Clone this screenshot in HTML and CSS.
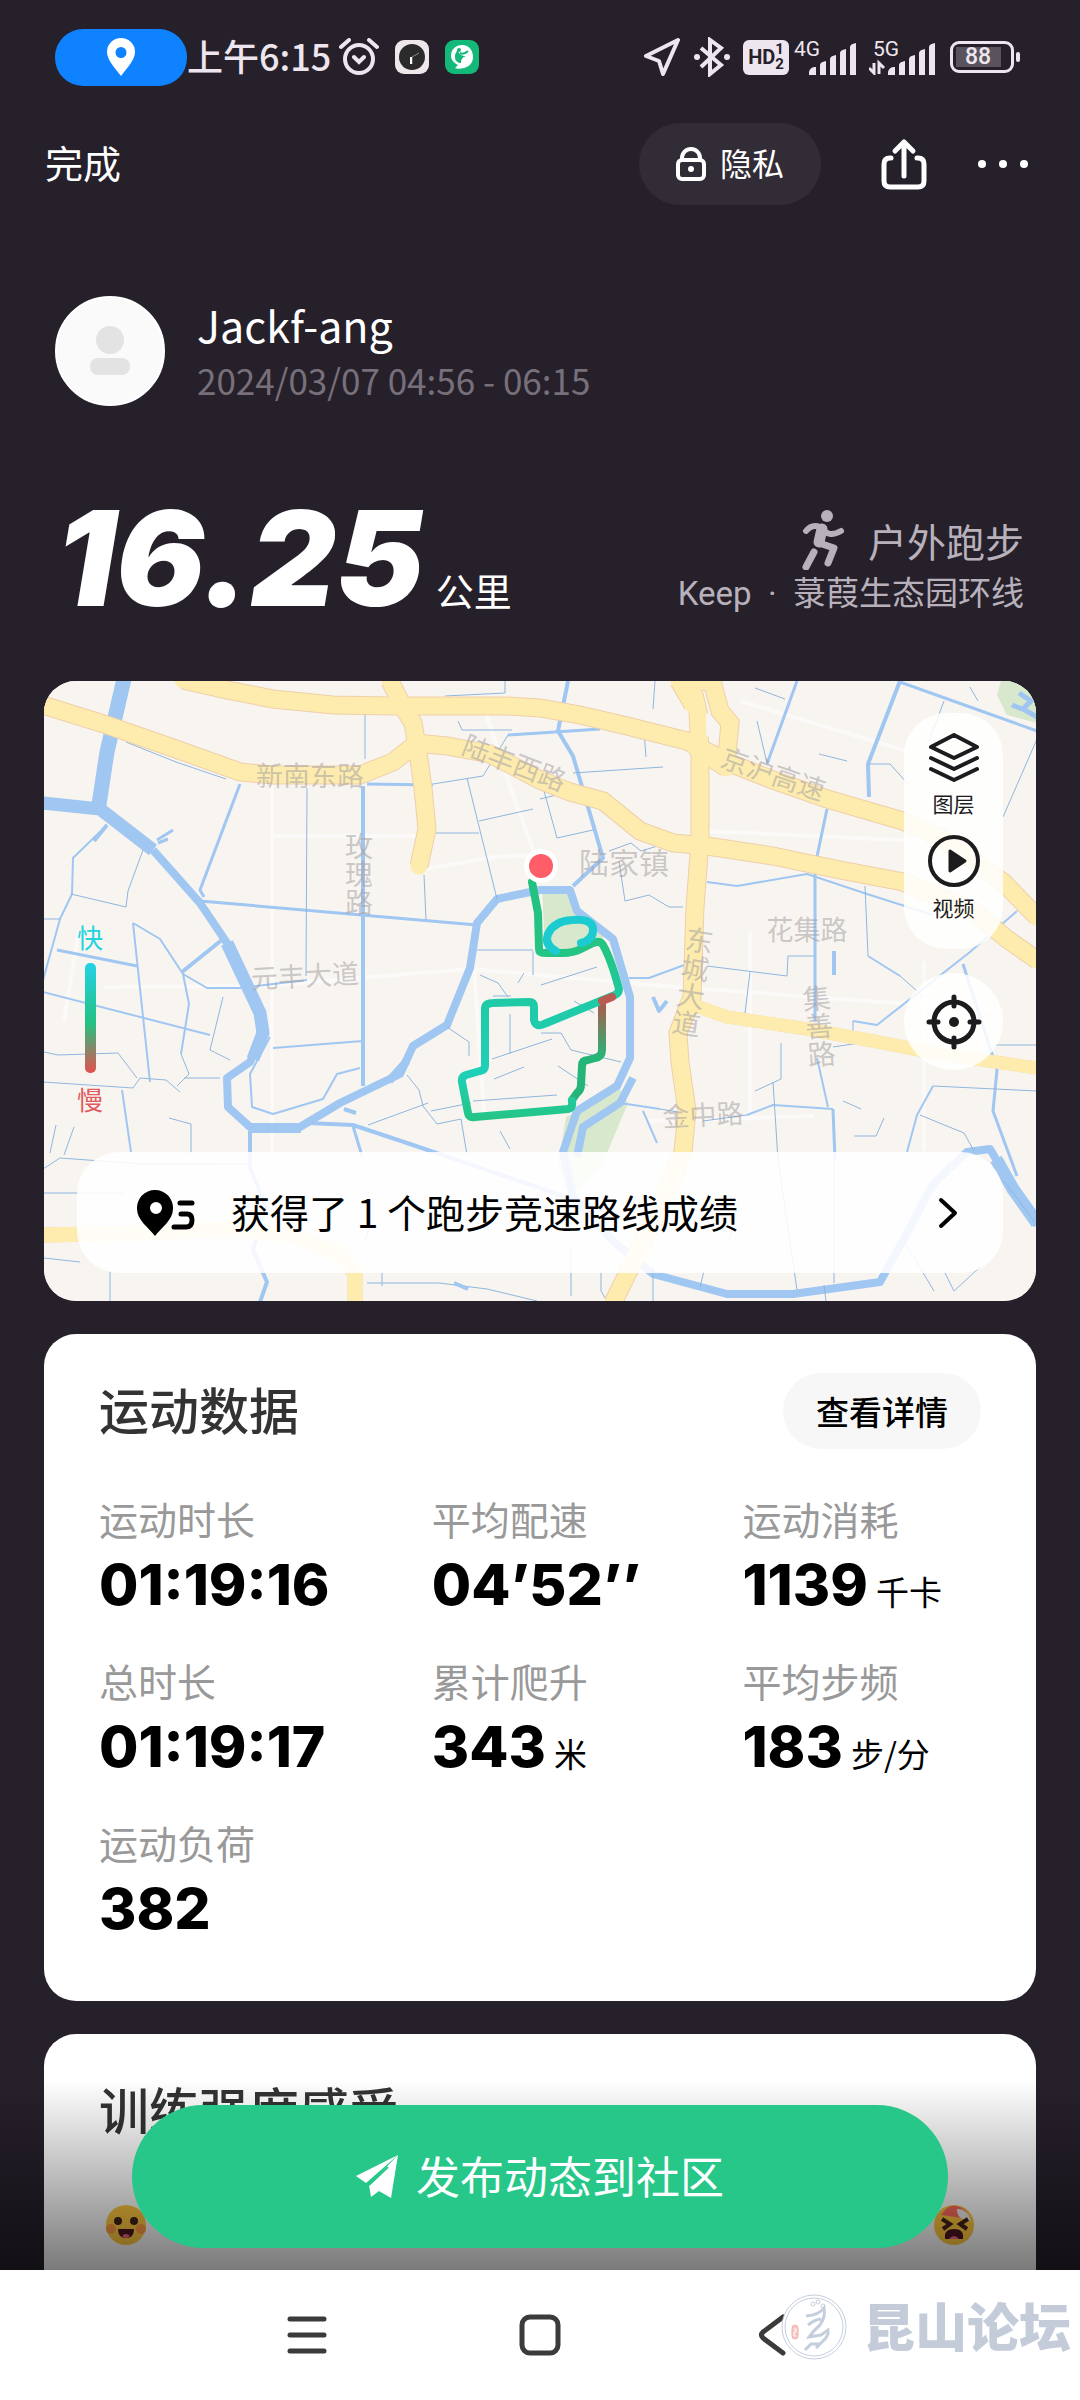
FILE: index.html
```html
<!DOCTYPE html>
<html lang="zh-CN">
<head>
    <meta charset="UTF-8">
    <meta name="viewport" content="width=device-width, initial-scale=1.0">
    <title>户外跑步</title>
    <link rel="stylesheet" href="styles.css">
</head>
<body>
    <div class="status-bar">
        <span class="location-pill">
            <svg width="28" height="38" viewBox="0 0 28 38"><path fill="#fff" fill-rule="evenodd" d="M14 0a14 14 0 0 1 14 14c0 8-8 16-14 24C8 30 0 22 0 14A14 14 0 0 1 14 0zm0 9a5 5 0 1 0 0 11 5 5 0 0 0 0-11z"/></svg>
        </span>
        <span class="time">上午6:15</span>
        <svg class="alarm" width="40" height="38" viewBox="0 0 40 38" fill="none" stroke="#eee6ee" stroke-width="4" stroke-linecap="round"><circle cx="20" cy="21" r="14"/><path d="M2 9l8-7M38 9l-8-7M15 19l5 5 5-5"/></svg>
        <svg class="app" width="34" height="34" viewBox="0 0 34 34"><rect width="34" height="34" rx="9" fill="#eee8ea"/><circle cx="17" cy="17" r="13" fill="#2c2b2b"/><path d="M17 24v-7l7-4" fill="none" stroke="#8c8888" stroke-width="1"/><path d="M16 17v7" stroke="#fff" stroke-width="2"/></svg>
        <svg class="app" width="34" height="34" viewBox="0 0 34 34"><rect width="34" height="34" rx="9" fill="#14b878"/><path fill="#fff" fill-rule="evenodd" d="M17 5c7 0 11 5 11 12s-5 10-9 11-7 1-9 0l3-3c-4-2-7-5-7-9 0-7 5-11 11-11zm-2 4c-4 2-5 5-5 8 0 4 3 6 6 6 0-4 2-6 5-7-2 0-4 0-6-2-2-1-2-4 0-5z"/><circle cx="14" cy="10" r="2" fill="#14b878"/><path d="M15 13q4 2 8-2" fill="none" stroke="#14b878" stroke-width="2"/></svg>
        <div class="status-right">
            <svg width="36" height="38" viewBox="0 0 36 38" fill="none" stroke="#eee6ee" stroke-width="4" stroke-linejoin="round"><path d="M34 2L2 18l13 5 4 13z"/></svg>
            <svg class="bluetooth" width="38" height="40" viewBox="0 0 38 40" fill="none" stroke="#eee6ee" stroke-width="4"><path d="M8 11l20 17-11 9V3l11 8L8 30"/><circle cx="4" cy="20" r="3" fill="#eee6ee" stroke="none"/><circle cx="34" cy="20" r="3" fill="#eee6ee" stroke="none"/></svg>
            <span class="hd"><b>HD</b><span class="hd-sims"><i>1</i><i>2</i></span></span>
            <span class="signal">
                <span class="network">4G</span>
                <svg width="48" height="32" viewBox="0 0 48 32" fill="#eee6ee"><path d="M0 29a6 6 0 0 1 7-5v8H0zM11 22q0-3 6-4v14h-6zM21 16q0-3 6-4v20h-6zM31 10q0-3 6-4v26h-6zM41 4q0-3 6-4v32h-6z"/></svg>
            </span>
            <span class="signal signal-5g">
                <span class="network">5G</span>
                <svg width="67" height="32" viewBox="0 0 67 32" fill="#eee6ee"><path d="M19 29a6 6 0 0 1 7-5v8h-7zM30 22q0-3 6-4v14h-6zM40 16q0-3 6-4v20h-6zM50 10q0-3 6-4v26h-6zM60 4q0-3 6-4v32h-6z"/><path d="M5 20v10l-5-5M10 31V20l5 5" fill="none" stroke="#eee6ee" stroke-width="3"/></svg>
            </span>
            <span class="battery"><span>88</span></span>
        </div>
    </div>

    <header class="top-bar">
        <button class="btn-done">完成</button>
        <button class="btn-privacy">
            <svg width="30" height="34" viewBox="0 0 30 34" fill="none" stroke="#fff" stroke-width="4"><rect x="2" y="13" width="26" height="19" rx="4"/><path d="M6 13v-2a9 9 0 0 1 18 0v2"/><circle cx="15" cy="22" r="3" fill="#fff" stroke="none"/></svg>
            <span>隐私</span>
        </button>
        <button class="btn-icon" aria-label="分享">
            <svg width="46" height="52" viewBox="0 0 46 52" fill="none" stroke="#fff" stroke-width="5" stroke-linecap="round" stroke-linejoin="round"><path d="M10 20H9q-6 0-6 6v17q0 6 6 6h28q6 0 6-6V26q0-6-6-6h-1M23 38V4M14 13l9-9 9 9"/></svg>
        </button>
        <button class="btn-icon btn-more" aria-label="更多">
            <svg width="52" height="10" viewBox="0 0 52 10" fill="#fff"><circle cx="5" cy="5" r="4"/><circle cx="26" cy="5" r="4"/><circle cx="47" cy="5" r="4"/></svg>
        </button>
    </header>

    <main class="container">
        <section class="profile">
            <span class="avatar">
                <svg width="40" height="50" viewBox="0 0 40 50" fill="#e3e3e3"><circle cx="20" cy="14" r="14"/><rect y="32" width="40" height="17" rx="8"/></svg>
            </span>
            <div>
                <div class="name">Jackf-ang</div>
                <div class="date">2024/03/07 04:56 - 06:15</div>
            </div>
        </section>

        <section class="summary">
            <h1 class="distance">16.25<small>公里</small></h1>
            <div class="workout">
                <div class="workout-type">
                    <svg width="44" height="60" viewBox="0 0 44 60" fill="none" stroke="#b8b1bb" stroke-linecap="round" stroke-linejoin="round"><circle cx="25" cy="6" r="6" fill="#b8b1bb" stroke="none"/><path d="M4 21c4-5 9-6 14-4 7 8 12 9 21 4" stroke-width="6"/><path d="M20 19l-3 13" stroke-width="11"/><path d="M17 33l15 5-6 15" stroke-width="7"/><path d="M12 42L4 57" stroke-width="7"/></svg>
                    <span>户外跑步</span>
                </div>
                <div class="workout-route">Keep&nbsp; ·&nbsp; 菉葭生态园环线</div>
            </div>
        </section>

        <section class="map">
            <svg class="map-canvas" viewBox="0 0 992 620" preserveAspectRatio="xMidYMid slice" fill="none">
                <defs>
                    <linearGradient id="slow" x1="0" y1="318" x2="0" y2="376" gradientUnits="userSpaceOnUse"><stop offset="0" stop-color="#b65349"/><stop offset="1" stop-color="#26b579"/></linearGradient>
                    <linearGradient id="pace" x1="0" y1="200" x2="0" y2="440" gradientUnits="userSpaceOnUse"><stop offset="0" stop-color="#24c181"/><stop offset=".3" stop-color="#24c483"/><stop offset=".5" stop-color="#1fcaa6"/><stop offset=".8" stop-color="#1fd0b8"/><stop offset="1" stop-color="#24c483"/></linearGradient>
                    <!-- main roads, drawn once as casing and once as fill -->
                    <g id="roads">
                        <path d="M139-1L183 9 229 18 289 24 349 25H463L496 27 536 34 579 44 643 60 683 81 729 99 783 118 859 140 896 156 959 201 993 236"/>
                        <path d="M-1 24L63 44 129 67 196 91 229 94H316L349 81 373 62 403 65 446 73 496 99 526 111 559 120 596 150 629 162 663 165 729 175 796 189 859 201 929 230 963 258 993 279"/>
                        <path d="M346 0L359 26 369 42 374 71 379 107 383 148 375 185"/>
                        <path d="M646-3L654 30 656 71V160L651 226 648 316 634 352 636 381 643 430 639 471 613 532 569 622"/>
                        <path d="M646 0h22l8 30 10 12-3 32M635 0l14 24M650 65l32 22"/>
                        <path d="M643 322L683 336 763 348 829 360 896 373 993 387" stroke-width="13"/>
                        <path d="M-1 554L100 552 183 548 249 554 296 573 311 593V621" stroke-width="15"/>
                    </g>
                </defs>
                <rect width="992" height="620" fill="#f8f5f1"/>
                <g fill="#d8e8cd">
                    <path d="M498 208h30l5 22 32 24-30 14h-34z"/>
                    <path d="M576 408l8 14-26 62-28 30-16-28 8-50z"/>
                    <path d="M957 0h36v42l-30-8-10-20z"/>
                </g>
                <path d="M975 12l12 8-8 8 14 8M968 24l10 4" stroke="#9fc6f2" stroke-width="5"/>
                <!-- side streets -->
                <g stroke="#fff" stroke-width="4" opacity=".5">
                    <path d="M228 94v440M60 306L215 305 426 288 620 305 960 330M440 27l30 90 25 68M230 155h150M380 188l70-12 40-2M706 250v190M440 432l-10-145M660 150l220 10M35 250l-15 90"/>
                    <path d="M696 20l200 60M880 280v190M600 440l170-5M60 480l150-2"/>
                </g>
                <!-- rivers and canals -->
                <g stroke="#a0c6f2" stroke-linejoin="round">
                    <path d="M80-2L63 71 54 130" stroke-width="15"/>
                    <path d="M-1 122L56 128 109 169" stroke-width="13"/>
                    <path d="M109 169L156 222 183 262 216 332 219 352 206 381 183 397 184 426 206 446H256L296 422 356 393 369 365 403 344 426 287 433 242 453 218 496 209H526L533 230 569 258 586 316 586 377 573 405 533 430 519 471 529 516 569 560 609 593 683 613H749L836 601 863 552 889 503 923 471 946 468 969 507 993 544" stroke-width="8"/>
                    <path d="M183 262l33 70 3 20-10 26M952 478l17 30 24 34" stroke-width="13"/>
                    <path d="M589 397l-13 25-37 24-6 30M345 400l18-20M205 448h52" stroke-width="8"/>
                    <path d="M319 105V405M179 258L138 291M263 442L309 444 363 462 496 507 560 530M524 0L514 50 529 75 559 177 529 205M856 0L824 83 825 116M63 144L50 160M206 450v37l16 38-13 44 14 32-7 20" stroke-width="4"/>
                    <path d="M196 103L156 209 160 216M156 220L433 244M13 269L93 285M309 445l9 30M753 0L723 83M856 1L926 26 993 50M783 128L771 185V340M919 283L953 389 949 430 973 495M323 103l66 1M464 54L496 52 556 48M789 428l2 51M129 149l-16 10M124 158l-10 4" stroke-width="3"/>
                    <path d="M89 242L116 258 139 293 163 307 196 307 263 299M89 242L106 401M166 354L-1 311M63 144L29 177 28 213 16 238-1 299M226 356L206 393 208 426 229 433 279 418 293 393 316 387M139 293l6 30-8 50M78 409L87 471M229 367L319 360M809 340L833 344 926 271 973 230M663 201L693 205 763 193 823 213 889 234M703 434L729 424 789 428M773 377L784 426M616 428l-40-6M599 430L613 462M585 297h20L643 283M824 275L856 295M889 405L873 434 863 471" stroke-width="2"/>
                    <g stroke="#8fb6de" stroke-width="1">
                        <path d="M16 238H-1M99 169L84 210 82 226 27 213M179 316L166 369 186 379M137 373l8 20-12 12"/>
                        <path d="M-1 401l90 6 7-10 26 2 14 12M0 371l14 3 60-2 19 25M176 397h-36M-1 488l17-11 83 6h104M125 437l22 6v30M30 446l-10 28M12 444l-6 28M0 577l36 4M66 590v30M321 560l6-17M323 602h72l48 6 50 12M338 590v15M0 512h80"/>
                        <path d="M82 61l50 20 50 17M389 103L439 95 464 54M423 97L453 218M321 34v44M263 107L262 295M380 194l2 45M389 152h46M435 140l54-12M433 269h56M489 270v24M436 294l18 8 10 14M449 315h18M466 333v40M448 378l60-20M450 398l30-12M429 420l84-6M403 346l22 15v14M363 394l12 15 4 16 14 18 24-5 6 36M324 444l60-22M387 430l40-8M456 450l10 18M461 0v12l-60 3M414 40l4 9h50"/>
                        <path d="M611 0l-2 28M529 92l90-6M600 50l2 26M500 110l13 47 36-8M496 118l25-6M565 170l22-8 10 8 33-10M575 180l6 40 24-6 20 12 14 0M821 205L824 275M856 295L880 316M809 340v12M663 285L743 295 744 275H771M706 291L701 332M711 7l30 11M713 40l10 42M900 20L885 60M824 83h22l18 20M775 73l28 7M993 58L959 136M926 6l8 14"/>
                        <path d="M659 440L703 434M711 410l26-12v-36M729 401L734 479 753 609M616 428L640 432M889 405L993 410M810 455h22l8-18M876 434l44 18 10 18M951 364h42M799 420l18 8M789 366l26-4M790 480v122M480 292l-6 10M497 304l56-18M497 352l20 0 10 17 50 12M530 320l20 12M514 385l30 20"/>
                        <path d="M609 585v35M660 590l-4 16M695 520l-10 40M557 590v20l6 10M527 565v50M780 604l2 16M900 590l10 20 26-24M860 560l30 50M960 500l30 40M905 480l-15 30"/>
                    </g>
                    <path d="M609 316l6 14 8-10M790 270v24M300 428l12 4M410 602l14 6" stroke-width="4"/>
                </g>
                <use href="#roads" stroke="#efcfaa" stroke-width="19"/>
                <use href="#roads" stroke="#fdecae" stroke-width="17" stroke-linecap="round"/>
                <path d="M662 32l5 4v22l-5-4z" fill="#f8f5f1"/>
                <g class="map-labels">
                    <text x="266" y="105">新南东路</text>
                    <text class="vertical" x="315" y="193">玫瑰路</text>
                    <text x="261" y="305" transform="rotate(-3 261 295)">元丰大道</text>
                    <text x="470" y="92" transform="rotate(21 470 83)">陆丰西路</text>
                    <text x="729" y="103" transform="rotate(19 729 94)">京沪高速</text>
                    <text class="town" x="580" y="193">陆家镇</text>
                    <text x="763" y="259">花集路</text>
                    <text class="vertical" x="649" y="301" transform="rotate(9 649 301)">东城大道</text>
                    <text class="vertical" x="775" y="345" transform="rotate(-5 775 345)">集善路</text>
                    <text x="659" y="444" transform="rotate(-3 659 434)">金中路</text>
                </g>
                <!-- running track coloured by pace -->
                <g stroke-width="8" stroke-linejoin="round" stroke-linecap="round">
                    <path d="M558 320V369q0 7-7 8l-7 2q-6 0-6 6l-1 19q0 5-4 8l-5 7" stroke="url(#slow)"/>
                    <path d="M488 201L494 232 495 268q0 4 6 4l18 0q10 0 18-4l12-6q7-3 10 2 8 14 16 44 0 4-4 6L500 343q-8 4-10-4v-13q0-5-5-5l-36 1q-8 0-8 6v57q0 4-5 5l-14 4q-5 2-4 7l6 31q1 5 7 4l93-8q5-1 4-8" stroke="url(#pace)"/>
                    <path d="M512 270q-12-6-8-17 6-13 24-14 19-2 21 8 1 12-12 15" stroke="#1bcbd0" stroke-width="8"/>
                    <path d="M558 320l10-4" stroke="#b85c52"/>
                </g>
                <circle cx="497" cy="185" r="17" fill="#fff"/>
                <circle cx="497" cy="185" r="12" fill="#ff5d68"/>
            </svg>

            <div class="pace-legend">
                <span class="fast">快</span>
                <span class="pace-bar"></span>
                <span class="slow">慢</span>
            </div>

            <div class="map-tools">
                <div class="tool-group">
                    <button class="tool">
                        <svg width="52" height="50" viewBox="0 0 52 50" fill="none" stroke="#1c1b1d" stroke-width="4" stroke-linecap="round" stroke-linejoin="round"><path d="M26 2L49 14 26 25 3 14zM3 25l23 11 23-11M3 36l23 11 23-11"/></svg>
                        图层
                    </button>
                    <button class="tool">
                        <svg width="52" height="52" viewBox="0 0 52 52"><circle cx="26" cy="26" r="24" fill="none" stroke="#1c1b1d" stroke-width="4"/><path d="M22 16l15 10-15 10z" fill="#1c1b1d" stroke="#1c1b1d" stroke-width="3" stroke-linejoin="round"/></svg>
                        视频
                    </button>
                </div>
                <button class="tool-locate" aria-label="定位">
                    <svg width="56" height="56" viewBox="0 0 56 56" fill="none" stroke="#1c1b1d" stroke-width="5" stroke-linecap="round"><circle cx="28" cy="28" r="20"/><path d="M28 3v9M28 44v9M3 28h9M44 28h9"/><circle cx="28" cy="28" r="5" fill="#1c1b1d" stroke="none"/></svg>
                </button>
            </div>

            <a class="route-result" href="#">
                <svg width="58" height="46" viewBox="0 0 58 46"><path fill-rule="evenodd" d="M18 0a18 18 0 0 1 18 19c0 11-12 19-18 27C12 38 0 30 0 19A18 18 0 0 1 18 0zm1 12a6 6 0 1 0 0 12 6 6 0 0 0 0-12z"/><path d="M43 13h12M44 24h6q5 0 5 6 0 7-6 7H37" fill="none" stroke="#000" stroke-width="5" stroke-linecap="round"/></svg>
                <span>获得了 1 个跑步竞速路线成绩</span>
                <svg class="chevron" width="20" height="32" viewBox="0 0 20 32" fill="none" stroke="#000" stroke-width="4" stroke-linecap="round" stroke-linejoin="round"><path d="M3 3l14 13L3 29"/></svg>
            </a>
        </section>

        <section class="card">
            <div class="card-header">
                <h2>运动数据</h2>
                <button class="btn-detail">查看详情</button>
            </div>
            <dl class="stats">
                <div><dt>运动时长</dt><dd>01:19:16</dd></div>
                <div><dt>平均配速</dt><dd>04’52’’</dd></div>
                <div><dt>运动消耗</dt><dd>1139<small>千卡</small></dd></div>
                <div><dt>总时长</dt><dd>01:19:17</dd></div>
                <div><dt>累计爬升</dt><dd>343<small>米</small></dd></div>
                <div><dt>平均步频</dt><dd>183<small>步/分</small></dd></div>
                <div><dt>运动负荷</dt><dd>382</dd></div>
            </dl>
        </section>

        <section class="card">
            <div class="card-header">
                <h2>训练强度感受</h2>
            </div>
            <div class="feelings">
                <svg width="42" height="42" viewBox="0 0 42 42"><circle cx="21" cy="21" r="20" fill="#ffc83f"/><circle cx="6" cy="25" r="5" fill="#ff9b45"/><circle cx="36" cy="25" r="5" fill="#ff9b45"/><circle cx="13" cy="17" r="4" fill="#432018"/><circle cx="29" cy="17" r="4" fill="#432018"/><path d="M13 25h16q0 9-8 9t-8-9z" fill="#49141e"/><path d="M17 32q4-4 8 0-4 4-8 0z" fill="#f2688e"/></svg>
                <svg width="42" height="42" viewBox="0 0 42 42"><circle cx="21" cy="21" r="20" fill="#ffc83f"/><path d="M8 11Q19-6 34 8l-4 6z" fill="#ff6b60"/><path d="M24 5q10-1 14 12l-8-2q-6-2-6-10z" fill="#f3f0ee"/><path d="M9 15l8 5-7 5M35 15l-8 5 7 5" fill="none" stroke="#432018" stroke-width="4"/><path d="M13 34q-1-8 8-8t8 8z" fill="#49141e" stroke="#49141e" stroke-width="2"/><path d="M16 35q5-6 10 0z" fill="#f2688e"/></svg>
            </div>
        </section>

        <div class="publish-bar">
            <button class="btn-publish">
                <svg width="42" height="44" viewBox="0 0 42 44" fill="#fff"><path d="M42 0L0 21l10 7z"/><path d="M42 0L13 30l2 12 8-6 12 7z"/><path d="M32 12L13 30" stroke="#26c789" stroke-width="2"/></svg>
                <span>发布动态到社区</span>
            </button>
        </div>
    </main>

    <nav class="nav-bar">
        <button aria-label="菜单"><svg width="42" height="42" viewBox="0 0 42 42" fill="none" stroke="#3b3b3b" stroke-width="5" stroke-linecap="round"><path d="M4 5h34M4 21h34M4 37h34"/></svg></button>
        <button aria-label="主页"><svg width="42" height="42" viewBox="0 0 42 42" fill="none" stroke="#3b3b3b" stroke-width="5"><rect x="3" y="3" width="36" height="36" rx="8"/></svg></button>
        <button aria-label="返回"><svg width="42" height="42" viewBox="0 0 42 42" fill="none" stroke="#3b3b3b" stroke-width="5" stroke-linecap="round" stroke-linejoin="round"><path d="M31 3L11 18q-3 3 0 6l20 15"/></svg></button>
        <div class="forum-mark">
            <svg width="66" height="70" viewBox="0 0 66 70" fill="none" stroke="#c4cedd"><circle cx="33" cy="35" r="32" fill="#fff" stroke-width="1"/><circle cx="33" cy="35" r="29" stroke-width="1"/><path d="M25 24q13-1 18-8 2 8-4 17-7 6-11 12l12-2 7-5q1 6-5 11l-7 7M27 33q8-6 13-6M24 58l6-6 8 0" stroke-width="3"/><circle cx="32" cy="12" r="2"/><circle cx="37" cy="10" r="2"/><circle cx="42" cy="14" r="2"/><rect x="11" y="33" width="6" height="14" rx="3" fill="#f6c6c2" stroke="#f3b5b0"/><path d="M13 37h2v3h-2v4h2" stroke="#fff"/></svg>
            <span>昆山论坛</span>
        </div>
    </nav>
</body>
</html>
```

FILE: styles.css
```css
* {
    box-sizing: border-box;
}
body {
    font-family: 'Noto Sans CJK SC', sans-serif;
    margin: 0;
    background: #26202b;
    color: #fff;
    height: 100vh;
    display: flex;
    flex-direction: column;
    overflow: hidden;
}
button {
    font-family: inherit;
    border: 0;
    padding: 0;
    margin: 0;
    background: none;
    color: inherit;
    cursor: pointer;
}
svg {
    display: block;
    flex-shrink: 0;
}
h1, h2, dl, dt, dd {
    margin: 0;
}

/* status bar */
.status-bar {
    display: flex;
    align-items: center;
    flex-shrink: 0;
    height: 114px;
    padding: 0 60px 0 55px;
    color: #eee6ee;
}
.location-pill {
    display: flex;
    align-items: center;
    justify-content: center;
    width: 132px;
    height: 57px;
    border-radius: 28px;
    background: #0e82ff;
}
.time {
    padding-bottom: 4px;
    font-size: 36px;
    font-weight: 500;
    line-height: 48px;
    white-space: nowrap;
}
.alarm {
    margin-left: 8px;
}
.app {
    margin-left: 16px;
}
.status-right {
    display: flex;
    align-items: center;
    margin-left: auto;
}
.bluetooth {
    margin-left: 13px;
}
.hd {
    display: flex;
    align-items: center;
    justify-content: center;
    width: 46px;
    height: 35px;
    margin-left: 12px;
    border-radius: 6px;
    background: #eee6ee;
    color: #26202b;
    font-family: Roboto, sans-serif;
    font-size: 20px;
}
.hd-sims {
    display: flex;
    flex-direction: column;
    font-size: 15px;
    font-weight: 700;
    line-height: 15px;
}
.hd-sims i {
    font-style: normal;
}
.signal {
    position: relative;
    display: flex;
    align-items: flex-end;
    height: 36px;
    margin-left: 5px;
    padding-left: 15px;
}
.signal-5g {
    margin-left: 12px;
    padding-left: 0;
}
.network {
    position: absolute;
    left: 0;
    top: 0;
    font-family: Roboto, sans-serif;
    font-size: 21px;
    line-height: 20px;
}
.signal-5g .network {
    left: 4px;
}
.battery {
    position: relative;
    display: flex;
    align-items: center;
    width: 64px;
    height: 32px;
    margin: 0 6px 0 14px;
    padding: 3px;
    border: 3px solid #eee6ee;
    border-radius: 9px;
}
.battery::after {
    content: '';
    position: absolute;
    right: -9px;
    top: 8px;
    width: 4px;
    height: 10px;
    border-radius: 2px;
    background: #eee6ee;
}
.battery span {
    width: 45px;
    padding-left: 9px;
    background: #59535d;
    font-family: Roboto, sans-serif;
    font-size: 23px;
    font-weight: 500;
    line-height: 20px;
}

/* top bar */
.top-bar {
    display: flex;
    align-items: center;
    flex-shrink: 0;
    height: 100px;
    padding: 0 51px 0 45px;
}
.btn-done {
    padding-bottom: 4px;
    font-size: 38px;
    line-height: 56px;
}
.btn-privacy {
    display: flex;
    align-items: center;
    justify-content: center;
    gap: 14px;
    width: 182px;
    height: 82px;
    margin-left: auto;
    border-radius: 41px;
    background: #322c36;
    font-size: 32px;
}
.btn-privacy span {
    padding-bottom: 4px;
}
.btn-icon {
    margin-left: 60px;
}
.btn-more {
    margin-left: 50px;
}

/* content */
.container {
    position: relative;
    flex: 1;
    min-height: 0;
    padding: 82px 44px 0;
    overflow: hidden;
}
.profile {
    display: flex;
    align-items: center;
    gap: 32px;
    height: 110px;
    padding-left: 11px;
}
.avatar {
    display: flex;
    align-items: center;
    justify-content: center;
    width: 110px;
    height: 110px;
    border-radius: 50%;
    background: #fafafa;
    border: 2px solid #fff;
}
.name {
    font-size: 43px;
    line-height: 58px;
}
.date {
    color: #77707b;
    font-size: 35px;
    line-height: 54px;
}
.summary {
    display: flex;
    justify-content: space-between;
    align-items: flex-end;
    height: 275px;
    padding: 0 12px 63px 12px;
}
.distance {
    display: flex;
    align-items: baseline;
    margin-bottom: 4px;
    font-family: Inter, sans-serif;
    font-size: 132px;
    font-weight: 900;
    font-style: italic;
    line-height: 100px;
    white-space: nowrap;
}
.distance small {
    margin-left: 12px;
    font-family: 'Noto Sans CJK SC', sans-serif;
    font-size: 38px;
    font-weight: 400;
    font-style: normal;
    line-height: 48px;
}
.workout {
    color: #b8b1bb;
    text-align: right;
}
.workout-type {
    display: flex;
    align-items: center;
    justify-content: flex-end;
    gap: 22px;
    font-size: 39px;
    line-height: 60px;
}
.workout-route {
    font-family: Roboto, 'Noto Sans CJK SC', sans-serif;
    font-size: 33px;
    line-height: 48px;
}

/* map */
.map {
    position: relative;
    overflow: hidden;
    border-radius: 32px;
    background: #f8f5f1;
    color: #1c1b1d;
}
.map-canvas {
    width: 100%;
    height: auto;
}
.map-labels {
    fill: #a49fa2;
    fill-opacity: .55;
    font-size: 27px;
    text-anchor: middle;
}
.map-labels .town {
    font-size: 30px;
}
.map-labels .vertical {
    font-size: 28px;
    writing-mode: vertical-rl;
}
.pace-legend {
    position: absolute;
    left: 33px;
    top: 236px;
    display: flex;
    flex-direction: column;
    align-items: center;
    gap: 6px;
    font-size: 26px;
    line-height: 40px;
}
.pace-bar {
    width: 11px;
    height: 110px;
    border-radius: 5px;
    background: linear-gradient(#23d3e6, #24c181 55%, #e4504f);
}
.fast {
    color: #23d3dd;
}
.slow {
    color: #e05a5e;
}
.map-tools {
    position: absolute;
    top: 32px;
    right: 33px;
    display: flex;
    flex-direction: column;
    gap: 24px;
}
.tool-group {
    display: flex;
    flex-direction: column;
    gap: 16px;
    width: 99px;
    height: 236px;
    padding-top: 20px;
    border-radius: 42px;
    background: rgba(255, 255, 255, .85);
}
.tool {
    display: flex;
    flex-direction: column;
    align-items: center;
    gap: 4px;
    font-size: 21px;
    line-height: 32px;
}
.tool-locate {
    display: flex;
    align-items: center;
    justify-content: center;
    width: 99px;
    height: 97px;
    border-radius: 50%;
    background: rgba(255, 255, 255, .85);
}
.route-result {
    position: absolute;
    left: 33px;
    right: 33px;
    bottom: 28px;
    display: flex;
    align-items: center;
    height: 121px;
    padding: 0 45px 0 60px;
    border-radius: 42px;
    background: rgba(255, 255, 255, .88);
    color: #000;
    font-size: 39px;
    text-decoration: none;
}
.route-result span {
    margin-left: 36px;
    padding-bottom: 4px;
}
.chevron {
    margin-left: auto;
}

/* cards */
.card {
    margin-top: 33px;
    padding: 39px 55px 46px;
    border-radius: 32px;
    background: #fff;
    color: #000;
}
.card-header {
    display: flex;
    align-items: center;
    justify-content: space-between;
    height: 76px;
}
.card h2 {
    padding-bottom: 6px;
    color: #333;
    font-size: 50px;
    font-weight: 500;
    line-height: 70px;
}
.btn-detail {
    width: 198px;
    height: 76px;
    border-radius: 38px;
    background: #f7f7f7;
    font-size: 33px;
    font-weight: 500;
}
.stats {
    display: grid;
    grid-template-columns: 332fr 310fr 238fr;
    row-gap: 22px;
    margin-top: 42px;
}
.stats dt {
    color: #999;
    font-size: 39px;
    line-height: 54px;
}
.stats dd {
    font-family: Inter, sans-serif;
    font-size: 57px;
    font-weight: 800;
    line-height: 80px;
    height: 86px;
    white-space: nowrap;
}
.stats small {
    margin-left: 8px;
    font-family: 'Noto Sans CJK SC', sans-serif;
    font-size: 33px;
    font-weight: 400;
    line-height: 40px;
}
.feelings {
    display: flex;
    justify-content: space-between;
    padding: 55px 6px 60px;
}

/* publish */
.publish-bar {
    position: absolute;
    left: 0;
    right: 0;
    bottom: 0;
    height: 190px;
    padding: 25px 132px 22px;
    background: linear-gradient(rgba(0, 0, 0, 0), rgba(0, 0, 0, .52));
}
.btn-publish {
    display: flex;
    align-items: center;
    justify-content: center;
    gap: 18px;
    width: 100%;
    height: 143px;
    border-radius: 72px;
    background: #26c789;
    font-size: 44px;
}
.btn-publish span {
    padding-bottom: 4px;
}

/* system navigation */
.nav-bar {
    position: relative;
    display: flex;
    justify-content: center;
    gap: 191px;
    flex-shrink: 0;
    height: 130px;
    padding-top: 44px;
    background: #fff;
}
.nav-bar button {
    width: 42px;
    height: 42px;
}
.forum-mark {
    position: absolute;
    right: 9px;
    top: 20px;
    display: flex;
    align-items: center;
    gap: 16px;
    color: #c4ccd9;
    font-size: 52px;
    font-weight: 900;
    line-height: 70px;
}
.forum-mark span {
    padding-bottom: 4px;
}
```
